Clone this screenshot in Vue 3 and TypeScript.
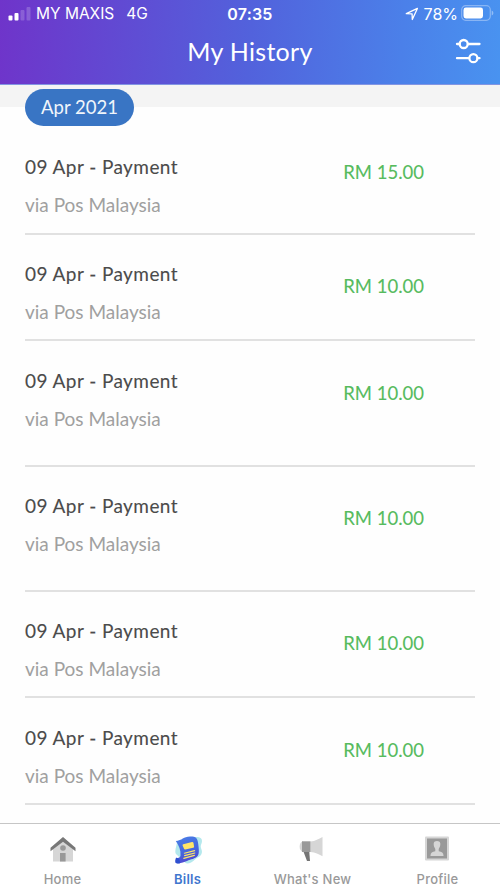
<script setup lang="ts">
interface Entry {
  title: string
  via: string
  amount: string
  height: number
  detailTop: number
  amountTop: number
}

const entries: Entry[] = [
  { title: '09 Apr - Payment', via: 'via Pos Malaysia', amount: 'RM 15.00', height: 108, detailTop: 28, amountTop: 33 },
  { title: '09 Apr - Payment', via: 'via Pos Malaysia', amount: 'RM 10.00', height: 106, detailTop: 27, amountTop: 39 },
  { title: '09 Apr - Payment', via: 'via Pos Malaysia', amount: 'RM 10.00', height: 126, detailTop: 28, amountTop: 40 },
  { title: '09 Apr - Payment', via: 'via Pos Malaysia', amount: 'RM 10.00', height: 125, detailTop: 27, amountTop: 39 },
  { title: '09 Apr - Payment', via: 'via Pos Malaysia', amount: 'RM 10.00', height: 106, detailTop: 27, amountTop: 39 },
  { title: '09 Apr - Payment', via: 'via Pos Malaysia', amount: 'RM 10.00', height: 107, detailTop: 28, amountTop: 40 },
]
</script>

<template>
  <div class="screen">
    <header class="header">
      <div class="status">
        <div class="carrier">
          <svg class="signal" width="23" height="15" viewBox="0 0 23 15">
            <rect x="0.5" y="9.5" width="4" height="5" rx="1" fill="#fff" />
            <rect x="6.5" y="7" width="4" height="7.500" rx="1" fill="#fff" />
            <rect x="12.500" y="4" width="4" height="10.500" rx="1" fill="#fff" opacity=".2" />
            <rect x="18.500" y="1" width="4" height="13.500" rx="1" fill="#fff" opacity=".2" />
          </svg>
          <span class="operator">MY MAXIS</span>
          <span class="network">4G</span>
        </div>
        <span class="clock">07:35</span>
        <div class="power">
          <svg class="location" width="14" height="14" viewBox="0 0 14 14">
            <path d="M1.300 6.700 12.400 1.400 7.300 12.500 7.100 6.900Z" fill="none" stroke="#fff" stroke-width="1.300" stroke-linejoin="round" />
          </svg>
          <span class="percent">78%</span>
          <svg class="battery" width="33" height="16" viewBox="0 0 33 16">
            <rect x="0.700" y="0.700" width="28.600" height="14.600" rx="4" fill="none" stroke="#fff" stroke-opacity=".35" stroke-width="1.200" />
            <rect x="2.500" y="2.600" width="19.500" height="10.800" rx="2.400" fill="#fff" />
            <path d="M30.700 5.500c2.200.8 2.200 4.200 0 5z" fill="#fff" opacity=".4" />
          </svg>
        </div>
      </div>
      <div class="titlebar">
        <h1>My History</h1>
        <button class="filter" aria-label="Filter">
          <svg width="26" height="26" viewBox="0 0 26 26" fill="none" stroke="#fff" stroke-width="2.300" stroke-linecap="round">
            <path d="M2 6H4.500M13 6h11.500M2 20.200h11.500M22.500 20.200h2" />
            <circle cx="8.700" cy="6" r="4" />
            <circle cx="18.400" cy="20.200" r="4" />
          </svg>
        </button>
      </div>
    </header>

    <main class="history">
      <div class="month-band"><span class="month">Apr 2021</span></div>
      <ul class="entries">
        <li v-for="(entry, i) in entries" :key="i" class="entry" :style="{ height: entry.height + 'px' }">
          <div class="detail" :style="{ paddingTop: entry.detailTop + 'px' }">
            <div class="title">{{ entry.title }}</div>
            <div class="via">{{ entry.via }}</div>
          </div>
          <div class="amount" :style="{ paddingTop: entry.amountTop + 'px' }">{{ entry.amount }}</div>
        </li>
      </ul>
    </main>

    <nav class="tabs">
      <a class="tab">
        <svg width="28" height="28" viewBox="0 0 28 28">
          <path d="M4 12 14 4l10 8v13.500H4z" fill="#d6d6d6" />
          <path d="M14 1 1.500 11.800v3.400L14 5.800l12.500 9.400v-3.400z" fill="#777" />
          <circle cx="14" cy="12" r="2.800" fill="#999" />
          <path d="M11 17h5.600v8.500H11z" fill="#999" />
        </svg>
        <span>Home</span>
      </a>
      <a class="tab active">
        <svg width="28" height="28" viewBox="0 0 28 28">
          <defs>
            <linearGradient id="bill" x1="0.300" y1="0" x2="0.600" y2="1">
              <stop offset="0" stop-color="#4a7ce6" />
              <stop offset=".55" stop-color="#4567de" />
              <stop offset="1" stop-color="#5142cf" />
            </linearGradient>
          </defs>
          <path d="M20 1.500c4-1 8-.3 8 3.500 0 3-2 4-1 7s1.500 4 0 7c-1.500 2-4 2.500-6 4.500-4 4-8 5-10 3L2 18c-2-3 1-8 1-13z" fill="#b4e8ed" />
          <path d="M1.800 5C8 4.500 9.500.6 16 .5c6-.1 7.500 1.500 8.200 7.300.7 5.700 1.300 9.800-.6 12.200-2.500 3-6.500 3-10.600 5-3.500 1.500-7.500 3-10.500 2-1.700-.6-1.500-4 0-4.600 2-.8 3.800-.6 4-3C6.900 14 5 10 1.800 5z" fill="url(#bill)" />
          <path d="M1.800 22c2.200-1 4.200 1.200 4.300 5.200-2 .5-4.200.3-4.600-.8z" fill="#2e50d0" />
          <path d="m9.200 8.300 8.800-2.200q1.200-.2 1.500 1l.6 3.600q0 .8-1 1.100l-7.800 1.600q-1 .2-1.300-.7l-1.400-3.100q-.3-1 .6-1.300z" fill="#ffe567" />
          <path d="m10.400 17.200 10.200-2.600M10.600 19.600l10.200-2.600M9.800 22.400l10.600-3" stroke="#ffe567" stroke-width="1.150" stroke-linecap="round" />
        </svg>
        <span>Bills</span>
      </a>
      <a class="tab">
        <svg class="nudged" width="28" height="28" viewBox="0 0 28 28">
          <path d="M5 5.300C.5 6 .5 15.200 5 16z" fill="#d6d6d6" />
          <path d="M12.500 5.500c5-.5 8-2.400 12-4.500v19.200c-4-2.100-7-3.800-12-4.200z" fill="#d6d6d6" />
          <path d="M4 5.300h8.500V16H4z" fill="#999" />
          <path d="M5.600 16h5.700l.7 9H9z" fill="#757575" />
        </svg>
        <span>What's New</span>
      </a>
      <a class="tab">
        <svg class="nudged" width="28" height="28" viewBox="0 0 28 28">
          <rect x="2" y="0.500" width="24" height="24" rx="1" fill="#d6d6d6" />
          <path d="M4 2.500h20v20H4z" fill="#999" />
          <path d="M10.700 7.500C11 4.300 17 4.300 17.300 7.500c.2 2.500-.8 4-1.600 5.500v2.300c3 .4 4.800 1.500 4.800 4.200v.5h-13v-.5c0-2.700 1.800-3.800 4.800-4.200V13c-.8-1.500-1.800-3-1.600-5.500z" fill="#d6d6d6" />
        </svg>
        <span>Profile</span>
      </a>
    </nav>
  </div>
</template>

<style>
body {
  margin: 0;
}
</style>

<style scoped>
.screen {
  width: 500px;
  height: 889px;
  display: flex;
  flex-direction: column;
  overflow: hidden;
  background: #fefefe;
  font-family: Lato, "Open Sans", sans-serif;
}
.header {
  flex: none;
  height: 85px;
  box-sizing: border-box;
  background: linear-gradient(94deg, #6f34ca 0%, #5262dc 50%, #4b80e9 80%, #4993f0 100%);
  border-bottom: 1px solid #8295e2;
  color: #fff;
}
.status {
  height: 28px;
  display: grid;
  grid-template-columns: 200px 100px 200px;
  align-items: center;
  font-family: Inter, sans-serif;
  font-size: 16px;
  line-height: 28px;
}
.carrier {
  display: flex;
  align-items: center;
  padding-left: 8px;
  font-size: 15.5px;
}
.signal {
  margin-top: -1px;
}
.operator {
  margin-left: 5px;
}
.network {
  margin-left: 12px;
}
.clock {
  text-align: center;
  font-weight: 600;
  letter-spacing: 0.2px;
}
.power {
  display: flex;
  align-items: center;
  justify-content: flex-end;
  padding-right: 6px;
}
.percent {
  margin: 0 3px 0 5px;
}
.battery {
  margin-top: -2px;
}
.titlebar {
  height: 56px;
  display: grid;
  grid-template-columns: 60px 380px 60px;
}
h1 {
  grid-column: 2;
  margin: 0;
  text-align: center;
  font-size: 25px;
  font-weight: 400;
  line-height: 47px;
  letter-spacing: 0.3px;
}
.filter {
  width: 26px;
  height: 26px;
  margin: 10px 0 0 15px;
  padding: 0;
  border: 0;
  background: none;
}
.history {
  flex: 1;
  min-height: 0;
}
.month-band {
  height: 42px;
  padding: 4px 25px 0;
  box-sizing: border-box;
  background: linear-gradient(#f4f4f4 22px, #fefefe 22px);
}
.month {
  display: block;
  width: 109px;
  height: 37px;
  border-radius: 19px;
  background: #3975c4;
  color: #f0f5fb;
  text-align: center;
  font-size: 18.5px;
  line-height: 36px;
}
.entries {
  margin: 0;
  padding: 0 25px;
  list-style: none;
}
.entry {
  display: flex;
  justify-content: space-between;
  box-sizing: border-box;
  border-bottom: 2px solid #e1e1e1;
}
.detail {
  line-height: 24px;
  font-size: 19px;
}
.title {
  color: #4b4b4b;
  letter-spacing: 0.43px;
  -webkit-text-stroke: 0.1px #4b4b4b;
}
.via {
  margin-top: 14px;
  color: #a0a0a0;
}
.amount {
  margin-right: 51px;
  color: #56bb5d;
  font-size: 18.5px;
  line-height: 24px;
  -webkit-text-stroke: 0.1px #56bb5d;
}
.tabs {
  flex: none;
  height: 66px;
  box-sizing: border-box;
  border-top: 1px solid #c6c6c6;
  display: grid;
  grid-template-columns: repeat(4, 125px);
  background: #fff;
}
.tab {
  display: flex;
  flex-direction: column;
  align-items: center;
  padding-top: 12px;
  color: #999;
  font: 500 13px/16px Inter, sans-serif;
  letter-spacing: 0.25px;
}
.tab span {
  margin-top: 7px;
}
.nudged {
  margin-right: 2px;
}
.tab.active {
  color: #3f76ce;
  font-weight: 600;
}
</style>
